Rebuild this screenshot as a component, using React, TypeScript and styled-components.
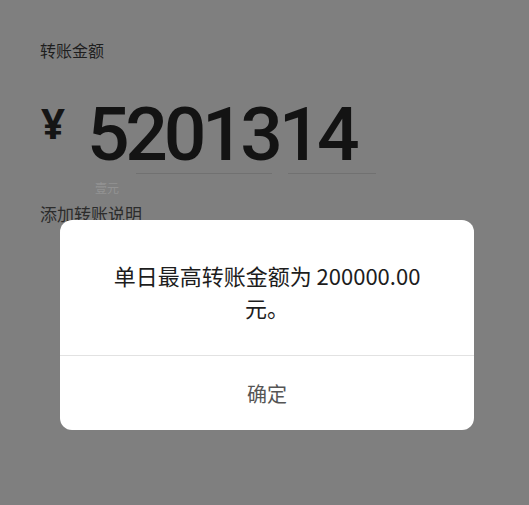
import styled, {createGlobalStyle} from "styled-components";

const GlobalStyle = createGlobalStyle`
    html, body {
        margin: 0;
        padding: 0;
        background: #7f7f7f;
        font-family: "Noto Sans CJK SC", "Noto Sans", sans-serif;
    }
`

export default function App() {
    return (
        <>
            <GlobalStyle/>
            <Page>
                <Label>转账金额</Label>
                <AmountRow>
                    <Currency>¥</Currency>
                    <Amount>5201314</Amount>
                </AmountRow>
                <Underline>
                    <span/>
                    <span/>
                </Underline>
                <Hint>壹元</Hint>
                <Remark>添加转账说明</Remark>
            </Page>
            <Dialog>
                <Message>
                    <Line>单日最高转账金额为 200000.00</Line>
                    <Line>元。</Line>
                </Message>
                <Confirm>确定</Confirm>
            </Dialog>
        </>
    );
}

const Page = styled.div`
    height: 505px;
    padding: 39px 0 0 40px;
    box-sizing: border-box;
    display: flex;
    flex-direction: column;
`
const Label = styled.div`
    font-size: 16px;
    line-height: 22px;
    color: #1e1e1e;
`
const AmountRow = styled.div`
    display: flex;
    align-items: flex-start;
    gap: 22px;
    margin-top: 33px;
    padding-left: 1px;
`
const Currency = styled.div`
    font-family: "Noto Sans", sans-serif;
    font-size: 42px;
    font-weight: 700;
    line-height: 58px;
    color: #151515;
`
const Amount = styled.div`
    font-family: Roboto, sans-serif;
    font-size: 75px;
    font-weight: 500;
    line-height: 80px;
    letter-spacing: -4.3px;
    color: #131313;
`
const Underline = styled.div`
    display: flex;
    gap: 16px;
    margin: -1px 0 0 96px;

    span {
        display: block;
        height: 1px;
        background: #717171;
    }
    span:first-child { width: 136px; }
    span:last-child { width: 88px; }
`
const Hint = styled.div`
    margin: 6px 0 0 55px;
    font-size: 12px;
    line-height: 16px;
    color: #939393;
`
const Remark = styled.div`
    margin-top: 6px;
    font-size: 17px;
    line-height: 24px;
    color: #2c2c2c;
`
const Dialog = styled.div`
    position: absolute;
    top: 220px;
    left: 60px;
    width: 414px;
    background: #fff;
    border-radius: 12px;
    display: flex;
    flex-direction: column;
    overflow: hidden;
`
const Message = styled.div`
    padding: 39px 24px 32px;
    display: flex;
    flex-direction: column;
    align-items: center;
    border-bottom: 1px solid #e2e2e2;
`
const Line = styled.div`
    font-size: 22px;
    line-height: 32px;
    color: #1d1d1d;
    text-align: center;
`
const Confirm = styled.div`
    height: 74px;
    display: flex;
    align-items: center;
    justify-content: center;
    font-size: 20px;
    color: #555;
`
